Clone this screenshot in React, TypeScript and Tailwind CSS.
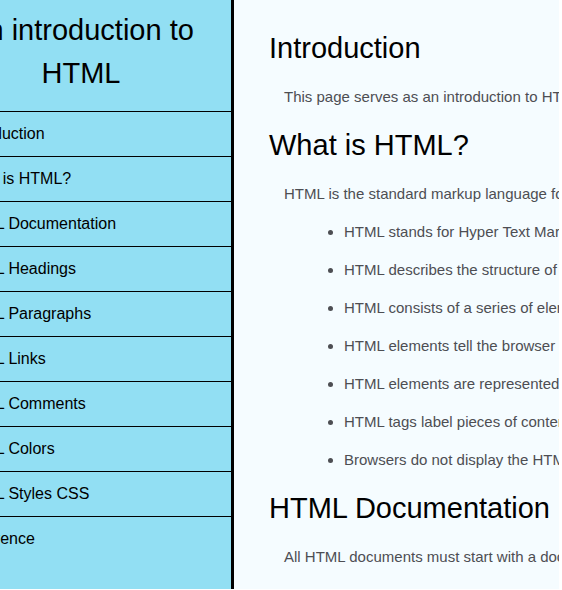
const navItems = [
  "Introduction",
  "What is HTML?",
  "HTML Documentation",
  "HTML Headings",
  "HTML Paragraphs",
  "HTML Links",
  "HTML Comments",
  "HTML Colors",
  "HTML Styles CSS",
  "Reference",
];

const facts = [
  "HTML stands for Hyper Text Markup",
  "HTML describes the structure of",
  "HTML consists of a series of elements",
  "HTML elements tell the browser",
  "HTML elements are represented",
  "HTML tags label pieces of content",
  "Browsers do not display the HTML",
];

const idFor = (title: string) => title.replace("?", "").split(" ").join("_");

function Heading({ children }: { children: string }) {
  return (
    <h2 id={idFor(children)} className="text-[29px] leading-[43px] text-black">
      {children}
    </h2>
  );
}

function Paragraph({ children }: { children: string }) {
  return <p className="pl-[15px]">{children}</p>;
}

export default function App() {
  return (
    <div className="flex h-screen overflow-hidden bg-white pr-[3px] pb-px font-['Liberation_Sans',Arial,sans-serif]">
      <div className="flex w-[234px] shrink-0 justify-end overflow-hidden">
        <nav className="w-[303px] shrink-0 border-r-3 border-black bg-[#92dff3] text-black">
          <h1 className="px-5 pt-[9px] pb-4 text-center text-[29px] leading-[43px]">
            An introduction to HTML
          </h1>
          <ul>
            {navItems.map((item) => (
              <li key={item} className="border-t border-black">
                <a href={`#${idFor(item)}`} className="block pl-[30px] text-base leading-[44px]">
                  {item}
                </a>
              </li>
            ))}
          </ul>
        </nav>
      </div>
      <main className="flex min-w-0 flex-1 flex-col gap-4 overflow-hidden bg-[#f5fcff] pt-[27px] pl-[35px] text-[15px] leading-[22px] whitespace-nowrap text-[#4d4e53]">
        <Heading>Introduction</Heading>
        <Paragraph>This page serves as an introduction to HTML</Paragraph>
        <Heading>What is HTML?</Heading>
        <Paragraph>HTML is the standard markup language for</Paragraph>
        <ul className="flex list-disc flex-col gap-4 pl-[75px]">
          {facts.map((fact) => (
            <li key={fact}>{fact}</li>
          ))}
        </ul>
        <Heading>HTML Documentation</Heading>
        <Paragraph>All HTML documents must start with a document</Paragraph>
      </main>
    </div>
  );
}
